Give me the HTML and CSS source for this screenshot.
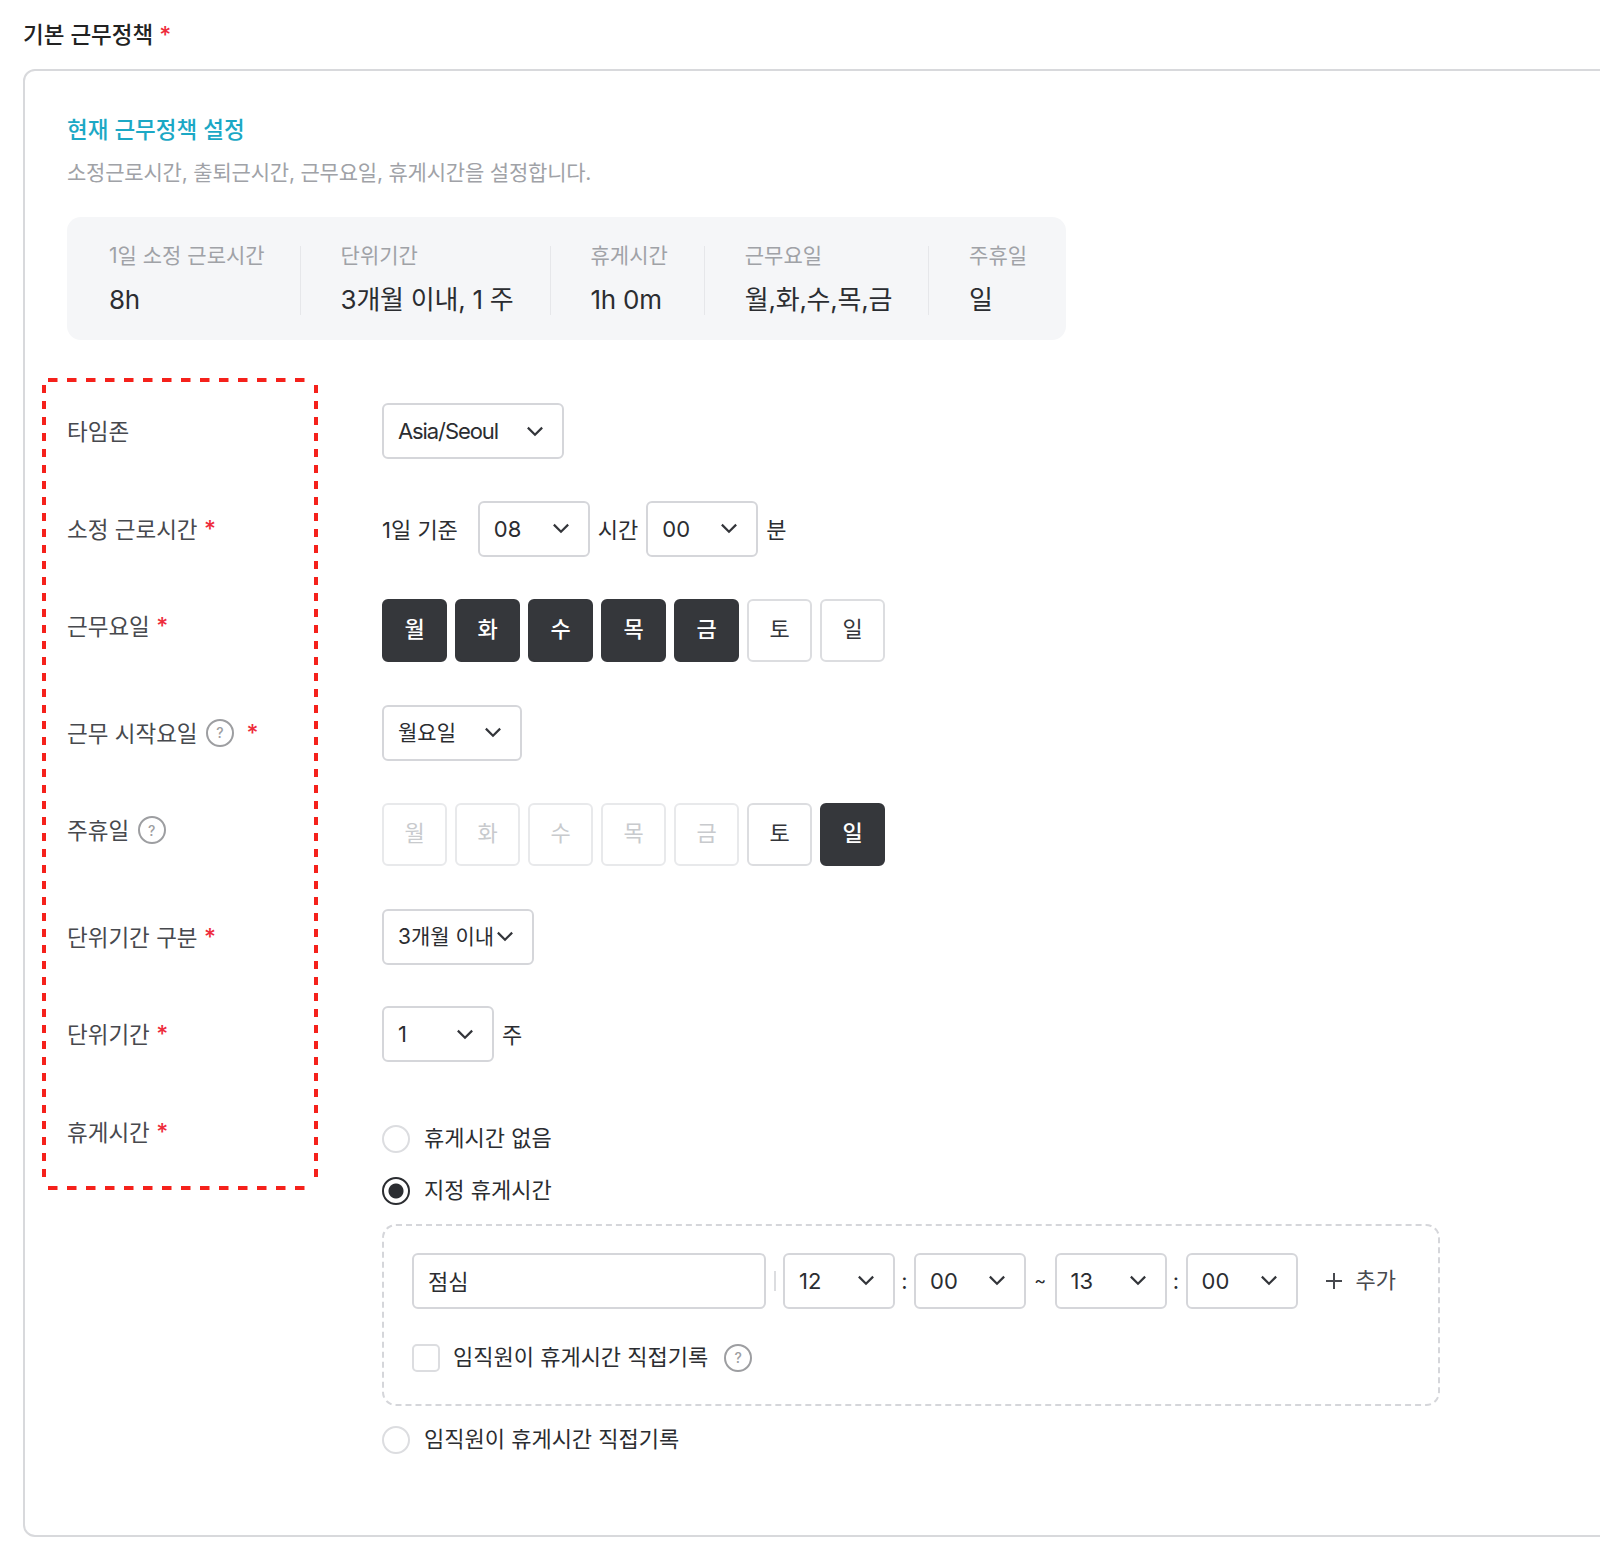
FILE: index.html
```html
<!DOCTYPE html>
<html lang="ko">
<head>
  <meta charset="utf-8">
  <title>기본 근무정책</title>
  <link rel="stylesheet" href="styles.css">
</head>
<body>
<div class="page">
  <div class="page-title">기본 근무정책 <span class="req">*</span></div>

  <div class="card">
    <div class="card-title">현재 근무정책 설정</div>
    <div class="card-desc">소정근로시간, 출퇴근시간, 근무요일, 휴게시간을 설정합니다.</div>

    <div class="summary">
      <div class="summary-item">
        <div class="summary-label">1일 소정 근로시간</div>
        <div class="summary-value">8h</div>
      </div>
      <div class="summary-item">
        <div class="summary-label">단위기간</div>
        <div class="summary-value">3개월 이내, 1 주</div>
      </div>
      <div class="summary-item">
        <div class="summary-label">휴게시간</div>
        <div class="summary-value">1h 0m</div>
      </div>
      <div class="summary-item">
        <div class="summary-label">근무요일</div>
        <div class="summary-value">월,화,수,목,금</div>
      </div>
      <div class="summary-item">
        <div class="summary-label">주휴일</div>
        <div class="summary-value">일</div>
      </div>
    </div>

    <div class="form">
      <svg class="highlight" width="276" height="812" viewBox="0 0 276 812">
        <path class="dash-h" d="M6 2H270M6 810H270"/>
        <path class="dash-v" d="M2 7V806M274 7V806"/>
      </svg>

      <div class="form-label"><span class="label-text">타임존</span></div>
      <div class="form-field">
        <div class="select w-tz"><span class="latin">Asia/Seoul</span> <svg class="chev" viewBox="0 0 16 10"><path d="M1.5 1.5 8 8l6.5-6.5"/></svg></div>
      </div>

      <div class="form-label"><span class="label-text">소정 근로시간</span> <span class="req">*</span></div>
      <div class="form-field">
        <span class="text after-label">1일 기준</span>
        <div class="select w-sm">08 <svg class="chev" viewBox="0 0 16 10"><path d="M1.5 1.5 8 8l6.5-6.5"/></svg></div>
        <span class="text">시간</span>
        <div class="select w-sm">00 <svg class="chev" viewBox="0 0 16 10"><path d="M1.5 1.5 8 8l6.5-6.5"/></svg></div>
        <span class="text">분</span>
      </div>

      <div class="form-label"><span class="label-text">근무요일</span> <span class="req">*</span></div>
      <div class="form-field">
        <div class="day active">월</div>
        <div class="day active">화</div>
        <div class="day active">수</div>
        <div class="day active">목</div>
        <div class="day active">금</div>
        <div class="day">토</div>
        <div class="day">일</div>
      </div>

      <div class="form-label"><span class="label-text">근무 시작요일</span> <span class="help">?</span> <span class="req">*</span></div>
      <div class="form-field">
        <div class="select w-day"><span class="kr">월요일</span> <svg class="chev" viewBox="0 0 16 10"><path d="M1.5 1.5 8 8l6.5-6.5"/></svg></div>
      </div>

      <div class="form-label"><span class="label-text">주휴일</span> <span class="help">?</span></div>
      <div class="form-field">
        <div class="day disabled">월</div>
        <div class="day disabled">화</div>
        <div class="day disabled">수</div>
        <div class="day disabled">목</div>
        <div class="day disabled">금</div>
        <div class="day">토</div>
        <div class="day active">일</div>
      </div>

      <div class="form-label"><span class="label-text">단위기간 구분</span> <span class="req">*</span></div>
      <div class="form-field">
        <div class="select w-unit"><span class="kr">3개월 이내</span> <svg class="chev" viewBox="0 0 16 10"><path d="M1.5 1.5 8 8l6.5-6.5"/></svg></div>
      </div>

      <div class="form-label"><span class="label-text">단위기간</span> <span class="req">*</span></div>
      <div class="form-field">
        <div class="select w-sm">1 <svg class="chev" viewBox="0 0 16 10"><path d="M1.5 1.5 8 8l6.5-6.5"/></svg></div>
        <span class="text">주</span>
      </div>

      <div class="form-label"><span class="label-text">휴게시간</span> <span class="req">*</span></div>
      <div class="break-group">
        <div class="radio-row"><span class="radio"></span><span class="row-text">휴게시간 없음</span></div>
        <div class="radio-row"><span class="radio checked"></span><span class="row-text">지정 휴게시간</span></div>

        <div class="break-box">
          <div class="break-row">
            <div class="input"><span class="input-text">점심</span></div>
            <span class="sep"></span>
            <div class="select w-sm">12 <svg class="chev" viewBox="0 0 16 10"><path d="M1.5 1.5 8 8l6.5-6.5"/></svg></div>
            <span class="colon">:</span>
            <div class="select w-sm">00 <svg class="chev" viewBox="0 0 16 10"><path d="M1.5 1.5 8 8l6.5-6.5"/></svg></div>
            <span class="tilde">~</span>
            <div class="select w-sm">13 <svg class="chev" viewBox="0 0 16 10"><path d="M1.5 1.5 8 8l6.5-6.5"/></svg></div>
            <span class="colon">:</span>
            <div class="select w-sm">00 <svg class="chev" viewBox="0 0 16 10"><path d="M1.5 1.5 8 8l6.5-6.5"/></svg></div>
            <div class="add-btn">
              <svg class="plus" viewBox="0 0 18 18"><path d="M9 1v16M1 9h16"/></svg>
              <span class="row-text">추가</span>
            </div>
          </div>
          <div class="check-row"><span class="checkbox"></span><span class="row-text">임직원이 휴게시간 직접기록</span> <span class="help">?</span></div>
        </div>

        <div class="radio-row last"><span class="radio"></span><span class="row-text">임직원이 휴게시간 직접기록</span></div>
      </div>
    </div>
  </div>
</div>
</body>
</html>
```
FILE: styles.css
```css
html, body {
  margin: 0;
  height: 1558px;
  overflow: hidden;
  background: #fff;
}
body {
  font-family: Inter, "Noto Sans CJK KR", sans-serif;
  font-size: 22px;
  color: #2b2d31;
}

.page {
  padding: 20px 0 0 23px;
}
.page-title {
  height: 30px;
  line-height: 30px;
  font-size: 22.5px;
  font-weight: 500;
  color: #222;
  margin-bottom: 18.5px;
}
.req {
  color: #ee2b3b;
  font-size: 23px;
  font-weight: 500;
}

.card {
  box-sizing: border-box;
  width: 1620px;
  height: 1468.5px;
  border: 2px solid #d8d9dc;
  border-radius: 12px;
  padding: 44.5px 0 0 42px;
}
.card-title {
  line-height: 30px;
  font-size: 22.5px;
  font-weight: 500;
  color: #1ba8c5;
}
.card-desc {
  margin-top: 14px;
  line-height: 28px;
  font-size: 21px;
  letter-spacing: -0.2px;
  color: #a0a2a7;
}

.summary {
  display: inline-flex;
  box-sizing: border-box;
  width: 999px;
  height: 123px;
  margin-top: 30px;
  padding: 29px 42px 25px;
  background: #f5f6f8;
  border-radius: 14px;
}
.summary-item {
  padding: 0 36px 0 40px;
  border-right: 1px solid #e6e7ea;
}
.summary-item:first-child {
  padding: 0 35px 0 0;
}
.summary-item:last-child {
  padding-right: 0;
  border-right: none;
}
.summary-label {
  line-height: 20px;
  font-size: 21px;
  color: #a0a2a7;
  white-space: nowrap;
}
.summary-value {
  margin-top: 19px;
  line-height: 30px;
  font-size: 26px;
  letter-spacing: -0.25px;
  color: #2b2d31;
  white-space: nowrap;
}

.form {
  position: relative;
  display: grid;
  grid-template-columns: 315px 1fr;
  row-gap: 43.5px;
  margin-top: 64px;
}
.highlight {
  position: absolute;
  top: -26px;
  left: -25px;
  pointer-events: none;
}
.highlight path {
  fill: none;
  stroke: #f5211b;
  stroke-width: 4;
}
.dash-h {
  stroke-dasharray: 9.5 9.5;
}
.dash-v {
  stroke-dasharray: 8 8;
}

.form-label {
  display: flex;
  align-items: center;
  gap: 6.5px;
  height: 54px;
  color: #47494e;
}
.label-text {
  margin-bottom: 2px;
  font-size: 22.5px;
}
.form-label .help {
  margin-left: 2px;
}
.help + .req {
  margin-left: 6px;
}
.form-field {
  display: flex;
  align-items: center;
  gap: 8px;
}

.select, .input {
  box-sizing: border-box;
  display: flex;
  align-items: center;
  justify-content: space-between;
  height: 56px;
  margin: -1px 0;
  padding: 0 18px 0 14px;
  border: 2px solid #d5d6da;
  border-radius: 6px;
  background: #fff;
  white-space: nowrap;
}
.chev {
  width: 18px;
  height: 11px;
  flex: none;
}
.chev path {
  fill: none;
  stroke: #33353a;
  stroke-width: 2;
}
.w-tz { width: 182px; }
.w-sm { width: 112px; }
.w-day { width: 140px; }
.w-unit { width: 152px; }

.latin {
  letter-spacing: -1.1px;
}
.kr {
  margin-bottom: 3px;
  font-size: 21px;
}
.text {
  margin-bottom: 2px;
  color: #2b2d31;
}
.after-label {
  margin-right: 12px;
}

.day {
  box-sizing: border-box;
  display: flex;
  align-items: center;
  justify-content: center;
  width: 65px;
  height: 63px;
  padding-bottom: 8px;
  border: 2px solid #dcdde0;
  border-radius: 6px;
  color: #33353a;
}
.day.active {
  background: #35373b;
  border-color: #35373b;
  color: #fff;
  font-weight: 500;
}
.day.disabled {
  border-color: #e8e9eb;
  color: #c8cacd;
}

.help {
  box-sizing: border-box;
  display: inline-flex;
  align-items: center;
  justify-content: center;
  width: 28px;
  height: 28px;
  border: 2px solid #9d9ea1;
  border-radius: 50%;
  font-size: 14px;
  font-weight: 500;
  color: #9d9ea1;
}

.row-text {
  margin-bottom: 5px;
}
.input-text {
  margin-bottom: 2px;
}
.break-group {
  padding-top: 20px;
}
.radio-row {
  display: flex;
  align-items: center;
  gap: 14px;
  height: 28px;
  margin-bottom: 24px;
}
.radio-row.last {
  margin: 20px 0 0;
}
.radio {
  box-sizing: border-box;
  width: 28px;
  height: 28px;
  border: 2px solid #dcdde0;
  border-radius: 50%;
}
.radio.checked {
  border: 2px solid #2b2d31;
  background: radial-gradient(circle, #2b2d31 0 7px, #fff 8px);
}

.break-box {
  box-sizing: border-box;
  width: 1058px;
  height: 182px;
  margin-top: -5px;
  padding: 28px 28px 0;
  border: 2px dashed #d5d6da;
  border-radius: 14px;
}
.break-row {
  display: flex;
  align-items: center;
}
.input {
  width: 354px;
}
.sep {
  width: 2px;
  height: 20px;
  margin: 0 7px 0 8px;
  background: #dcdde0;
}
.colon, .tilde {
  width: 19px;
  text-align: center;
}
.tilde {
  width: 28.5px;
  font-size: 18px;
}
.add-btn {
  display: flex;
  align-items: center;
  gap: 13px;
  margin-left: 27px;
  color: #47494e;
}
.plus {
  width: 18px;
  height: 18px;
}
.plus path {
  fill: none;
  stroke: #47494e;
  stroke-width: 2;
}
.check-row {
  display: flex;
  align-items: center;
  height: 28px;
  margin-top: 36px;
}
.check-row .help {
  margin-left: 16px;
}
.checkbox {
  box-sizing: border-box;
  width: 28px;
  height: 28px;
  margin-right: 13px;
  border: 2px solid #dcdde0;
  border-radius: 5px;
}
```
